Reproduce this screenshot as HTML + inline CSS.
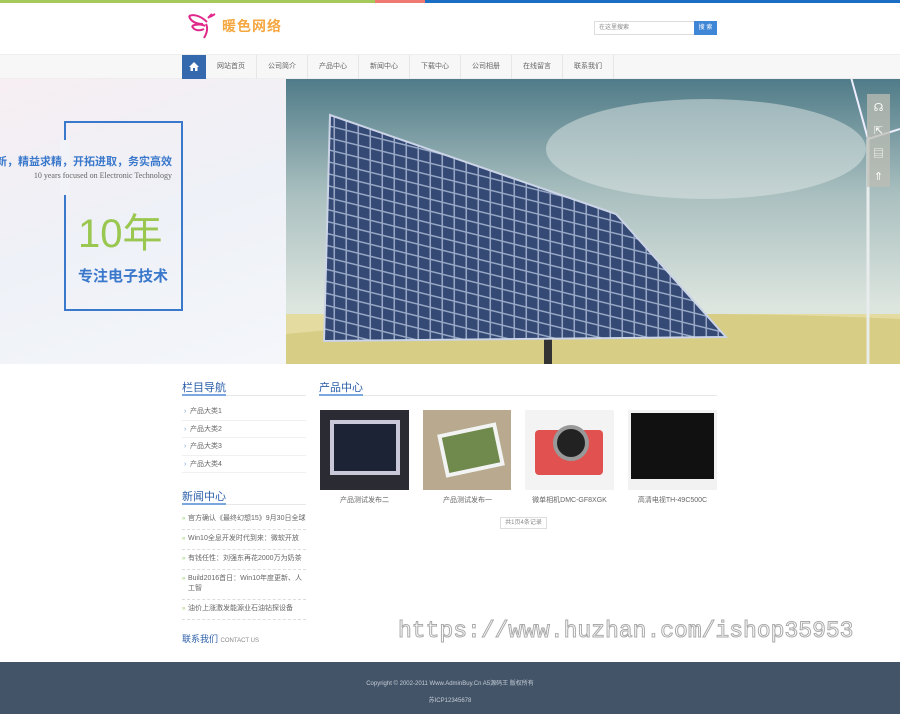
<!DOCTYPE html>
<html><head><meta charset="utf-8"><style>
*{margin:0;padding:0;box-sizing:border-box}
body{width:900px;height:714px;overflow:hidden;background:#fff;font-family:"Liberation Sans","Noto Sans CJK SC",sans-serif;position:relative;color:#555}
.abs{position:absolute}
.topbar{top:0;left:0;width:900px;height:3px;background:linear-gradient(90deg,#a6c95c 0 375px,#f07a72 375px 425px,#1a6fc4 425px)}
.nav{top:54px;left:0;width:900px;height:25px;background:#f7f7f7;border-top:1px solid #eee;border-bottom:1px solid #eee}
.nav a{position:absolute;top:0;height:24px;line-height:24px;font-size:7px;color:#666;text-align:center;width:51px;border-right:1px solid #e6e6e6}
.side li{list-style:none;font-size:7px;color:#666;height:17.5px;line-height:17px;border-bottom:1px solid #f0f0f0;padding-left:8px;position:relative}
.side li:before{content:"›";position:absolute;left:2px;color:#7aa0d0}
.news li{list-style:none;font-size:7px;color:#666;border-bottom:1px dashed #ddd;padding:4px 0 5px 6px;position:relative;line-height:10px}
.news li:before{content:"»";position:absolute;left:0;color:#9c6;font-size:6px}
.h{font-size:11px;color:#2a5ea8;border-bottom:1px solid #e8e8e8;height:17px;position:absolute}
.h span{display:inline-block;border-bottom:2px solid #7aa7dd;height:17px}
.cap{font-size:7px;color:#666;text-align:center;position:absolute;width:89px}
</style></head><body>
<div class="abs topbar"></div>
<svg class="abs" style="left:186px;top:12px" width="35" height="30" viewBox="0 0 35 30"><path d="M3 4c6-3 14 2 18 6M3 4c2 6 8 8 14 8M6 14c4-2 10-2 13 0M6 14c2 5 8 5 12 3M22 6l4-4M24 5l5-3M20 12c2 4 1 9-2 14" stroke="#e0288a" stroke-width="2" fill="none"/></svg>
<div class="abs" style="left:222px;top:16px;font-size:14px;color:#f5a740;font-weight:bold;letter-spacing:1px">暖色网络</div>
<div class="abs" style="left:594px;top:21px;width:101px;height:14px;border:1px solid #ddd;font-size:6px;color:#888;line-height:12px;padding-left:4px">在这里搜索</div>
<div class="abs" style="left:694px;top:21px;width:23px;height:14px;background:#3f86d6;color:#fff;font-size:6px;text-align:center;line-height:14px">搜 索</div>
<div class="abs nav">
<div class="abs" style="left:182px;top:0;width:24px;height:24px;background:#3569ad"><svg width="24" height="24"><path d="M12 7l-5 5h1.5v4h2.5v-3h2v3h2.5v-4H17z" fill="#fff"/></svg></div>
<a style="left:206px">网站首页</a><a style="left:257px">公司简介</a><a style="left:308px">产品中心</a><a style="left:359px">新闻中心</a><a style="left:410px">下载中心</a><a style="left:461px">公司相册</a><a style="left:512px">在线留言</a><a style="left:563px">联系我们</a>
</div>
<div class="abs" style="left:0;top:79px;width:286px;height:285px;background:linear-gradient(160deg,#f6eef2,#eef1f7 50%,#f4f6fa)"></div>
<div class="abs" style="left:64px;top:121px;width:119px;height:190px;border:2px solid #3a78cc"></div>
<div class="abs" style="left:60px;top:140px;width:10px;height:55px;background:#f1f3f8"></div>
<div class="abs" style="left:0;top:153px;width:172px;text-align:right;font-size:11px;color:#3a78cc;font-weight:bold;white-space:nowrap;overflow:hidden;direction:rtl"><span style="direction:ltr;unicode-bidi:embed">新，精益求精，开拓进取，务实高效</span></div>
<div class="abs" style="left:0;top:171px;width:172px;text-align:right;font-size:8px;color:#666;font-family:'Liberation Serif',serif">10 years focused on Electronic Technology</div>
<div class="abs" style="left:78px;top:210px;font-size:40px;color:#9ac750;line-height:48px">10年</div>
<div class="abs" style="left:78px;top:265px;font-size:15px;color:#3a78cc;font-weight:bold">专注电子技术</div>
<svg class="abs" style="left:286px;top:79px" width="614" height="285">
<defs><linearGradient id="sk" x1="0" y1="0" x2="0" y2="1"><stop offset="0" stop-color="#4f7b88"/><stop offset=".4" stop-color="#a9bfbf"/><stop offset=".8" stop-color="#dde5df"/></linearGradient>
<pattern id="cell" width="12" height="12" patternUnits="userSpaceOnUse" patternTransform="skewY(14)"><rect width="12" height="12" fill="#8da0c0"/><rect x="1" y="1" width="10.5" height="10.5" fill="#1f3566"/></pattern></defs>
<rect width="614" height="285" fill="url(#sk)"/>
<ellipse cx="420" cy="70" rx="160" ry="50" fill="#dfe7e6" opacity=".5"/>
<rect y="235" width="614" height="50" fill="#e3dba0"/>
<path d="M0 255 Q300 225 614 240 V285 H0z" fill="#d7cd84"/>
<rect x="258" y="255" width="8" height="30" fill="#333"/>
<path d="M44 36 L330 135 L440 258 L38 262z" fill="url(#cell)" stroke="#c9d3e6" stroke-width="2"/>
<path d="M44 36 L330 135 L440 258 L38 262z" fill="#ffffff" opacity=".1"/>
<line x1="582" y1="60" x2="582" y2="285" stroke="#e8ecec" stroke-width="3"/>
<line x1="582" y1="60" x2="560" y2="-20" stroke="#eef" stroke-width="2"/>
<line x1="582" y1="60" x2="614" y2="50" stroke="#eef" stroke-width="2"/>
</svg>
<div class="abs" style="left:867px;top:94px;width:23px;height:93px;background:rgba(190,190,180,.75)"></div>
<div class="abs" style="left:871px;top:97px;color:#fff;font-size:11px;line-height:23px;text-align:center;width:15px">☊<br>⇱<br>▤<br>⇑</div>
<div class="h" style="left:182px;top:379px;width:124px"><span>栏目导航</span></div>
<ul class="abs side" style="left:182px;top:403px;width:124px"><li>产品大类1</li><li>产品大类2</li><li>产品大类3</li><li>产品大类4</li></ul>
<div class="h" style="left:182px;top:488px;width:124px"><span>新闻中心</span></div>
<ul class="abs news" style="left:182px;top:510px;width:124px"><li>官方确认《最终幻想15》9月30日全球</li><li>Win10全息开发时代到来：微软开放</li><li>有钱任性：刘强东再花2000万为奶茶</li><li>Build2016首日：Win10年度更新、人工智</li><li>油价上涨激发能源业石油钻探设备</li></ul>
<div class="abs" style="left:182px;top:632px;font-size:9px;color:#2a5ea8">联系我们 <span style="font-size:6px;color:#888">CONTACT US</span></div>
<div class="h" style="left:319px;top:379px;width:398px"><span>产品中心</span></div>
<div class="abs" style="left:320px;top:410px;width:89px;height:80px;background:#2a2b33"><div style="margin:10px 10px;width:70px;height:55px;background:#1b2334;border:4px solid #c8c8d8"></div></div>
<div class="abs" style="left:423px;top:410px;width:88px;height:80px;background:#b9a98e"><div style="margin:18px 0 0 18px;width:60px;height:44px;background:#6f8a4c;border:4px solid #f3f3f3;transform:rotate(-12deg)"></div></div>
<div class="abs" style="left:525px;top:410px;width:89px;height:80px;background:#f3f3f3"><div style="margin:20px 0 0 10px;width:68px;height:45px;background:#e0514f;border-radius:4px"></div><div class="abs" style="left:28px;top:15px;width:36px;height:36px;border-radius:50%;background:#222;border:4px solid #999"></div></div>
<div class="abs" style="left:628px;top:410px;width:89px;height:80px;background:#f2f2f2"><div style="margin:3px 3px;width:83px;height:66px;background:#111"></div></div>
<div class="cap" style="left:320px;top:495px">产品测试发布二</div>
<div class="cap" style="left:423px;top:495px">产品测试发布一</div>
<div class="cap" style="left:525px;top:495px">微单相机DMC-GF8XGK</div>
<div class="cap" style="left:628px;top:495px">高清电视TH-49C500C</div>
<div class="abs" style="left:500px;top:517px;width:47px;height:12px;border:1px solid #ddd;font-size:6px;color:#888;text-align:center;line-height:10px">共1页4条记录</div>
<div class="abs" style="left:398px;top:618px;font-size:23px;color:#fff;font-family:'Liberation Mono',monospace;-webkit-text-stroke:1px #aaa">https://www.huzhan.com/ishop35953</div>
<div class="abs" style="left:0;top:662px;width:900px;height:52px;background:#435468;color:#c5cdd6;font-size:6px;text-align:center">
<div style="margin-top:16px">Copyright © 2002-2011 Www.AdminBuy.Cn A5源码王 版权所有</div>
<div style="margin-top:8px">苏ICP12345678</div></div>
</body></html>
